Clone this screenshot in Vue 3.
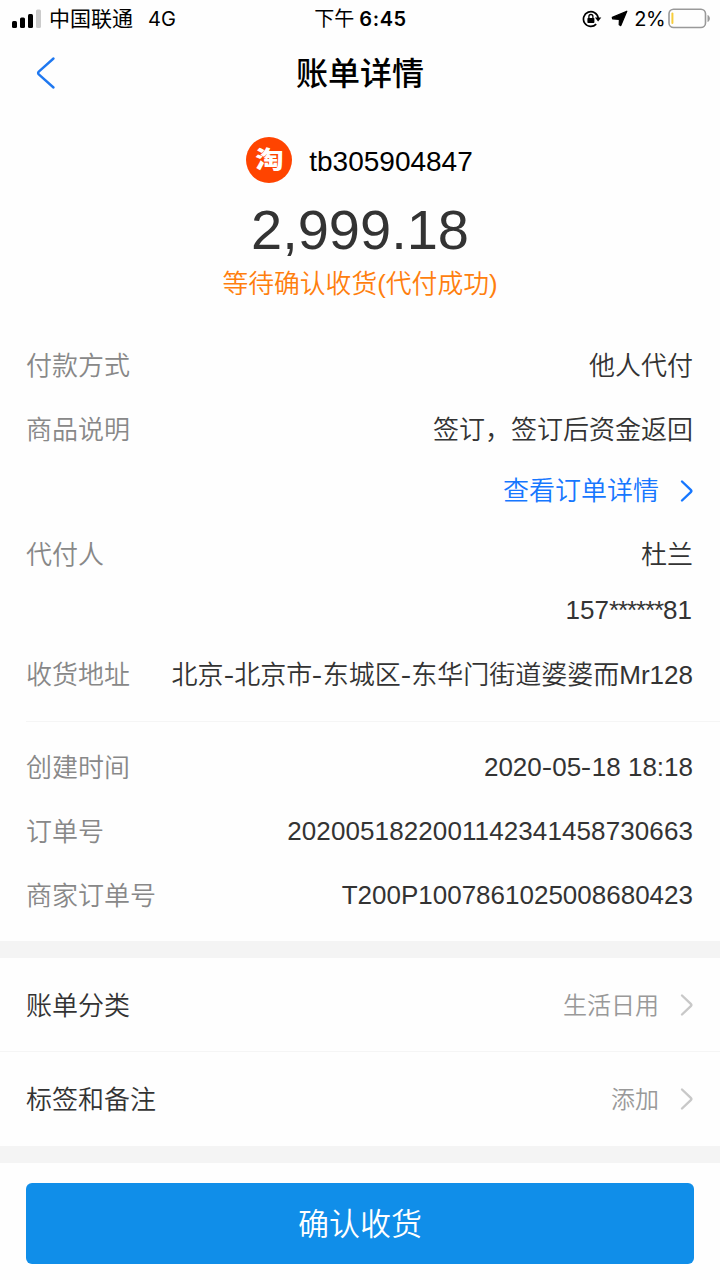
<script setup>
const payRows = [
  { label: '付款方式', value: '他人代付' },
  { label: '商品说明', value: '签订，签订后资金返回' },
  { value: '查看订单详情', type: 'link' },
  { label: '代付人', value: '杜兰' },
  { value: '157******81', type: 'phone' },
  { label: '收货地址', value: '北京-北京市-东城区-东华门街道婆婆而Mr128', type: 'address' }
]

const orderRows = [
  { label: '创建时间', value: '2020-05-18 18:18' },
  { label: '订单号', value: '2020051822001142341458730663', type: 'order-no' },
  { label: '商家订单号', value: 'T200P1007861025008680423' }
]

const settings = [
  { label: '账单分类', value: '生活日用' },
  { label: '标签和备注', value: '添加' }
]

// 连字符和星号单独拆出来，方便调整字距
const splitMarks = (text) => text.split(/(-|\*+)/)

const markClass = (part) => ({
  hyphen: part === '-',
  stars: part.startsWith('*')
})
</script>

<template>
  <div class="page">
    <!-- 状态栏 -->
    <div class="status-bar">
      <div class="status-left">
        <svg class="signal" width="30" height="20" viewBox="0 0 30 20">
          <rect x="0" y="12" width="5" height="7" rx="1.5" />
          <rect x="8" y="8.5" width="5" height="10.5" rx="1.5" />
          <rect x="16" y="5" width="5" height="14" rx="1.5" />
          <rect x="24" y="0.5" width="5" height="18.5" rx="1.5" fill="#cbcbcb" />
        </svg>
        <span class="carrier">中国联通</span>
        <span class="network">4G</span>
      </div>
      <div class="status-time"><span class="noon">下午</span><span class="clock">6:45</span></div>
      <div class="status-right">
        <svg class="lock" width="20" height="18" viewBox="0 0 20 18">
          <path d="M14.2 14.2A7.4 7.4 0 1 1 16.2 8" fill="none" stroke="#000" stroke-width="1.7" />
          <path d="M12.9 7.6h6.4l-3.2 4z" />
          <rect x="5.4" y="8" width="7" height="5" rx="0.7" />
          <path d="M6.9 8.4V6.5a2 2 0 0 1 4 0v1.9" fill="none" stroke="#000" stroke-width="1.3" />
        </svg>
        <svg class="location" width="17" height="17" viewBox="0 0 17 17">
          <path d="M15.8 1.2 9.8 15.6 8.2 14.8 8.4 9.4 1.6 8.8 1.3 7.4Z" stroke="#000" stroke-width="1.2" stroke-linejoin="round" />
        </svg>
        <span class="percent">2%</span>
        <svg class="battery" width="43" height="21" viewBox="0 0 43 21">
          <rect x="1" y="1.2" width="36.5" height="18.3" rx="4.6" fill="none" stroke="#999" stroke-width="1.6" />
          <rect x="3.4" y="4.6" width="2" height="11.4" rx="1" fill="#f7cd3b" />
          <path d="M39.5 7c3.2 1.2 3.2 5.8 0 7z" fill="#999" />
        </svg>
      </div>
    </div>

    <!-- 导航栏 -->
    <div class="nav-bar">
      <svg class="back" width="20" height="34" viewBox="0 0 20 34">
        <path d="M17.5 2.5 2.8 15.6Q1.4 17 2.8 18.4L17.5 31.5" />
      </svg>
      <h1 class="title">账单详情</h1>
    </div>

    <!-- 金额 -->
    <div class="summary">
      <div class="seller">
        <div class="avatar"><span class="avatar-text">淘</span></div>
        <span class="seller-name">tb305904847</span>
      </div>
      <div class="amount">2,999.18</div>
      <div class="pay-status">等待确认收货(代付成功)</div>
    </div>

    <div class="details pay-details">
      <div v-for="row in payRows" :key="row.value" class="row" :class="row.type">
        <span class="label">{{ row.label }}</span>
        <span class="value"><span v-for="(part, i) in splitMarks(row.value)" :key="i" :class="markClass(part)">{{ part }}</span></span>
        <svg v-if="row.type === 'link'" class="arrow" width="14" height="24" viewBox="0 0 14 24">
          <path d="M2 2.5 10.8 10.9Q12 12 10.8 13.1L2 21.5" />
        </svg>
      </div>
    </div>
    <div class="divider"></div>
    <div class="details order-details">
      <div v-for="row in orderRows" :key="row.label" class="row" :class="row.type">
        <span class="label">{{ row.label }}</span>
        <span class="value number"><span v-for="(part, i) in splitMarks(row.value)" :key="i" :class="markClass(part)">{{ part }}</span></span>
      </div>
    </div>

    <div class="settings">
      <div v-for="item in settings" :key="item.label" class="setting">
        <span class="setting-label">{{ item.label }}</span>
        <span class="setting-value">{{ item.value }}</span>
        <svg class="arrow" width="14" height="24" viewBox="0 0 14 24">
          <path d="M2 2.5 10.8 10.9Q12 12 10.8 13.1L2 21.5" />
        </svg>
      </div>
    </div>

    <div class="footer">
      <button class="confirm">确认收货</button>
    </div>
  </div>
</template>

<style>
body {
  margin: 0;
  background: #fff;
}
</style>

<style scoped>
.page {
  width: 720px;
  height: 1280px;
  overflow: hidden;
  background: #fefefe;
  color: #333;
  font-family: "Liberation Sans", "Noto Sans CJK SC", sans-serif;
  font-size: 26px;
  font-weight: 350;
}

/* 状态栏 */
.status-bar {
  display: grid;
  grid-template-columns: 1fr auto 1fr;
  align-items: center;
  height: 38px;
  padding: 0 9px 0 12px;
  color: #000;
  font-family: Inter, "Noto Sans CJK SC", sans-serif;
  font-size: 20px;
  font-weight: 400;
  line-height: 38px;
}

.status-left,
.status-time,
.status-right {
  display: flex;
  align-items: center;
}

.signal {
  margin: -1px 7px 0 0;
}

.carrier {
  font-size: 21px;
}

.network {
  margin-left: 15px;
  font-size: 20px;
}

.status-time {
  padding-right: 2px;
}

.noon {
  margin-right: 5px;
}

.clock {
  font-weight: 600;
  letter-spacing: 0.6px;
}

.status-right {
  justify-content: flex-end;
}

.lock {
  margin-top: -1px;
}

.location {
  margin: -2px 6px 0 9px;
}

.percent {
  letter-spacing: -0.6px;
}

.battery {
  margin: -2px 0 0 3px;
}

/* 导航栏 */
.nav-bar {
  display: grid;
  grid-template-columns: 60px 1fr 60px;
  align-items: center;
  height: 70px;
}

.back {
  margin-left: 36px;
  fill: none;
  stroke: #1f78f0;
  stroke-width: 2.4;
  stroke-linecap: round;
}

.title {
  margin: 0;
  padding-top: 3px;
  color: #000;
  font-size: 32px;
  font-weight: 500;
  line-height: 67px;
  text-align: center;
}

/* 金额区域 */
.summary {
  display: flex;
  flex-direction: column;
  align-items: center;
  height: 225px;
  padding-top: 29px;
  box-sizing: border-box;
}

.seller {
  display: flex;
  align-items: center;
  height: 46px;
  padding-right: 1px;
  color: #000;
}

.avatar {
  display: flex;
  align-items: center;
  justify-content: center;
  width: 46px;
  height: 46px;
  margin-right: 17px;
  border-radius: 50%;
  background: #ff4400;
}

.avatar-text {
  color: #fff;
  font-size: 27px;
  font-weight: 800;
  line-height: 46px;
  transform: scale(1.05, 0.88);
}

.seller-name {
  padding-top: 3px;
  font-size: 28px;
}

.amount {
  margin-top: 14px;
  font-size: 56px;
  line-height: 66px;
}

.pay-status {
  margin-top: 1px;
  color: #ff7f0e;
  font-size: 25.8px;
  line-height: 40px;
}

/* 明细 */
.pay-details {
  height: 388px;
}

.row {
  display: flex;
  align-items: center;
  height: 64px;
  padding: 0 27px 0 26px;
  line-height: 40px;
}

.label {
  padding-top: 2px;
  color: #888;
}

.value {
  margin-left: auto;
  padding-top: 2px;
}

.number {
  padding-top: 0;
}

.order-no .number {
  letter-spacing: 0.1px;
}

.hyphen {
  display: inline-block;
  margin-right: 0.5px;
  padding: 0 0.7px;
  transform: scaleX(1.2);
}

.stars {
  letter-spacing: -1.1px;
}

.arrow {
  margin-left: 21px;
  fill: none;
  stroke: #c8c8c8;
  stroke-width: 2.4;
  stroke-linecap: round;
}

.link {
  height: 61px;
  padding-right: 26px;
  color: #1677ff;
}

.link .value {
  padding: 0 0 2px;
}

.link .arrow {
  margin-top: -2px;
  stroke: #1677ff;
}

.phone {
  height: 49px;
  padding-right: 28px;
}

.phone .value {
  padding: 0 0 2px;
}

.address {
  margin-top: 7px;
}

.divider {
  height: 1px;
  margin-left: 26px;
  background: #f5f5f5;
}

.order-details {
  height: 219px;
  padding-top: 13px;
  box-sizing: border-box;
}

/* 设置项 */
.settings {
  border-top: 17px solid #f4f4f4;
  border-bottom: 17px solid #f4f4f4;
}

.setting {
  display: flex;
  align-items: center;
  height: 93px;
  padding: 0 26px;
}

.setting + .setting {
  height: 94px;
  border-top: 1px solid #f5f5f5;
}

.setting-label {
  padding-bottom: 3px;
}

.setting-value {
  margin-left: auto;
  padding-bottom: 3px;
  color: #999;
  font-size: 24px;
}

.footer {
  padding: 20px 26px 0;
}

.confirm {
  display: block;
  width: 100%;
  height: 81px;
  padding: 0 0 4px;
  border: none;
  border-radius: 6px;
  background: #108ee9;
  color: #fff;
  font-family: inherit;
  font-size: 31px;
  font-weight: inherit;
}
</style>
